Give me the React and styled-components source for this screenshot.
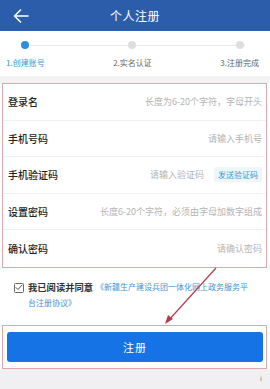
import React from 'react';
import styled, { createGlobalStyle } from 'styled-components';

const GlobalStyle = createGlobalStyle`
  html, body {
    margin: 0;
    padding: 0;
    background: #ffffff;
  }
  body {
    font-family: "Noto Sans CJK SC", "Noto Sans", sans-serif;
  }
`;

const STEPS = [
  { label: '1.创建账号', active: true },
  { label: '2.实名认证' },
  { label: '3.注册完成' },
];

const FIELDS = [
  { label: '登录名', hint: '长度为6-20个字符，字母开头' },
  { label: '手机号码', hint: '请输入手机号' },
  { label: '手机验证码', hint: '请输入验证码', action: '发送验证码' },
  { label: '设置密码', hint: '长度6-20个字符，必须由字母加数字组成' },
  { label: '确认密码', hint: '请确认密码' },
];

export default function App() {
  return (
    <Page>
      <GlobalStyle />
      <Header>
        <BackButton>
          <svg width="16" height="14" viewBox="0 0 16 14" fill="none">
            <path d="M15 7H1.5M7.5 1L1.5 7l6 6" stroke="#fff" strokeWidth="1.5" strokeLinecap="round" strokeLinejoin="round" />
          </svg>
        </BackButton>
        <Title>个人注册</Title>
      </Header>

      <Steps>
        <Track>
          {STEPS.map(s => (
            <Step key={s.label}>
              <Dot active={s.active} />
              <StepLabel active={s.active}>{s.label}</StepLabel>
            </Step>
          ))}
        </Track>
      </Steps>

      <Divider />

      <FormBox>
        {FIELDS.map((f, i) => (
          <Row key={f.label} last={i === FIELDS.length - 1}>
            <Label>{f.label}</Label>
            <Hint>{f.hint}</Hint>
            {f.action && <SendCode>{f.action}</SendCode>}
          </Row>
        ))}
      </FormBox>

      <Agreement>
        <Check>
          <svg width="8" height="7" viewBox="0 0 8 7" fill="none">
            <path d="M1 3.6l2 2L7 1" stroke="#555" strokeWidth="1" strokeLinecap="round" strokeLinejoin="round" />
          </svg>
        </Check>
        <AgreeText>
          <AgreeLine>
            <Strong>我已阅读并同意</Strong>
            <LinkText>《新疆生产建设兵团一体化网上政务服务平</LinkText>
          </AgreeLine>
          <AgreeLine>
            <LinkText>台注册协议》</LinkText>
          </AgreeLine>
        </AgreeText>
      </Agreement>

      <ButtonBox>
        <Submit>注册</Submit>
      </ButtonBox>

      <Footer>
        <Mark>i</Mark>
      </Footer>

      <Arrow width="70" height="62" viewBox="0 0 70 62">
        <line x1="56" y1="3" x2="8" y2="56" stroke="#b73a48" strokeWidth="1.2" />
        <path d="M5 59l3-9 5 4z" fill="#b73a48" />
      </Arrow>
    </Page>
  );
}

const Page = styled.div`
  position: relative;
  width: 270px;
  height: 389px;
  overflow: hidden;
  background: #ffffff;
  display: flex;
  flex-direction: column;
`;

const Header = styled.header`
  height: 31px;
  flex: none;
  background: #2c5dab;
  display: flex;
  align-items: center;
  justify-content: center;
  position: relative;
`;

const BackButton = styled.div`
  position: absolute;
  left: 13px;
  top: 9px;
  display: flex;
`;

const Title = styled.div`
  color: #ffffff;
  font-size: 12px;
  letter-spacing: 0.5px;
`;

const Steps = styled.div`
  height: 45px;
  flex: none;
  padding: 0 11px 0 6px;
  box-sizing: border-box;
`;

const Track = styled.div`
  position: relative;
  display: flex;
  justify-content: space-between;
  padding-top: 10px;

  &::before {
    content: '';
    position: absolute;
    left: 24px;
    right: 14px;
    top: 14px;
    height: 1px;
    background: #e6e6e6;
  }
`;

const Step = styled.div`
  position: relative;
  display: flex;
  flex-direction: column;
  align-items: center;
  gap: 9px;
`;

const Dot = styled.span`
  width: 8px;
  height: 8px;
  border-radius: 50%;
  background: ${p => (p.active ? '#2b8fe0' : '#dedede')};
`;

const StepLabel = styled.span`
  font-size: 8px;
  line-height: 10px;
  color: ${p => (p.active ? '#3a97d4' : '#666')};
`;

const Divider = styled.div`
  height: 7px;
  flex: none;
  background: #f3f3f3;
`;

const FormBox = styled.div`
  flex: none;
  margin: 0 3px 0 2px;
  border: 1px solid #dfa6ae;
  background: #fff;
`;

const Row = styled.div`
  height: 36.6px;
  box-sizing: border-box;
  display: flex;
  align-items: center;
  padding: 0 4px 0 5px;
  border-bottom: ${p => (p.last ? 'none' : '1px solid #f1f1f1')};
`;

const Label = styled.span`
  font-size: 10px;
  font-weight: 500;
  color: #222;
  margin-right: auto;
  white-space: nowrap;
`;

const Hint = styled.span`
  font-size: 9px;
  color: #b4b4b4;
  white-space: nowrap;
`;

const SendCode = styled.span`
  margin-left: 10px;
  padding: 3px 4px;
  font-size: 8px;
  line-height: 9px;
  color: #3b97cf;
  background: #eef6fa;
  border-radius: 2px;
`;

const Agreement = styled.div`
  height: 57px;
  flex: none;
  display: flex;
  align-items: flex-start;
  padding: 14px 16px 0 14px;
  box-sizing: border-box;
`;

const Check = styled.span`
  flex: none;
  width: 8px;
  height: 8px;
  margin-top: 1px;
  border: 1px solid #666;
  border-radius: 1.5px;
  display: flex;
  align-items: center;
  justify-content: center;
`;

const AgreeText = styled.div`
  margin-left: 4px;
  margin-top: -3px;
  display: flex;
  flex-direction: column;
`;

const AgreeLine = styled.div`
  height: 16px;
  display: flex;
  align-items: center;
  white-space: nowrap;
`;

const Strong = styled.span`
  font-size: 9.3px;
  line-height: 12px;
  font-weight: 700;
  color: #333;
  margin-right: 3px;
`;

const LinkText = styled.span`
  font-size: 8px;
  line-height: 12px;
  color: #3a97d4;
`;

const ButtonBox = styled.div`
  height: 44px;
  flex: none;
  margin: 0 3px 0 2px;
  border: 1px solid #dfa6ae;
  box-sizing: border-box;
  padding: 6px 3px 6px 4px;
  display: flex;
`;

const Submit = styled.button`
  flex: 1;
  border: none;
  border-radius: 3px;
  background: #1673e6;
  color: #fff;
  font-family: inherit;
  font-size: 11px;
  letter-spacing: 1px;
`;

const Footer = styled.div`
  flex: 1;
  background: #f0f0f2;
  display: flex;
  justify-content: flex-end;
  align-items: center;
  padding-right: 8px;
`;

const Mark = styled.span`
  font-size: 7px;
  color: #777;
  font-family: "DejaVu Sans", sans-serif;
`;

const Arrow = styled.svg`
  position: absolute;
  left: 160px;
  top: 265px;
`;
